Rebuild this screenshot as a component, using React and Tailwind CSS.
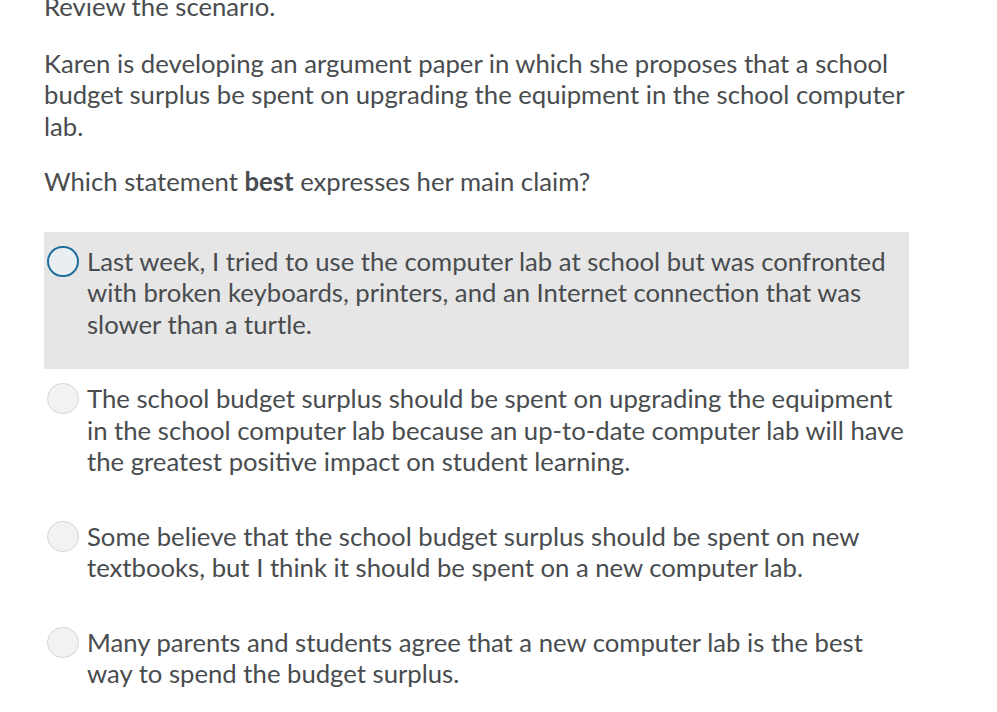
export default function App() {
  const options = [
    {
      id: 1,
      text: 'Last week, I tried to use the computer lab at school but was confronted with broken keyboards, printers, and an Internet connection that was slower than a turtle.',
      focused: true,
    },
    {
      id: 2,
      text: 'The school budget surplus should be spent on upgrading the equipment in the school computer lab because an up-to-date computer lab will have the greatest positive impact on student learning.',
    },
    {
      id: 3,
      text: 'Some believe that the school budget surplus should be spent on new textbooks, but I think it should be spent on a new computer lab.',
    },
    {
      id: 4,
      text: 'Many parents and students agree that a new computer lab is the best way to spend the budget surplus.',
    },
  ];

  return (
    <div
      className="min-h-screen bg-white overflow-hidden text-[#494c4e] text-[25.7px] leading-[31.5px]"
      style={{ fontFamily: 'Lato, "Noto Sans", sans-serif' }}
    >
      <div className="ml-[44px] w-[865px]">
        {/* Question */}
        <p className="-mt-[9px]">Review the scenario.</p>
        <p className="mt-[25px]">
          Karen is developing an argument paper in which she proposes that a school budget surplus be spent on upgrading the equipment in the school computer lab.
        </p>
        <p className="mt-[24px]">
          Which statement <span className="font-bold">best</span> expresses her main claim?
        </p>

        {/* Choices */}
        <div className="mt-[34px]">
          {options.map((opt) => (
            <div
              key={opt.id}
              className={`flex items-start pt-[14px] pb-[29px] ${opt.focused ? 'bg-[#e6e6e6]' : ''}`}
            >
              <span
                className={`ml-[3px] w-[32px] h-[31px] shrink-0 rounded-full ${
                  opt.focused
                    ? 'border-2 border-[#1f6c9e] bg-[#e9eef3]'
                    : 'border border-[#d3d5d8] bg-[#f1f2f4]'
                }`}
              />
              <span className="ml-[8px]">{opt.text}</span>
            </div>
          ))}
        </div>
      </div>
    </div>
  );
}
